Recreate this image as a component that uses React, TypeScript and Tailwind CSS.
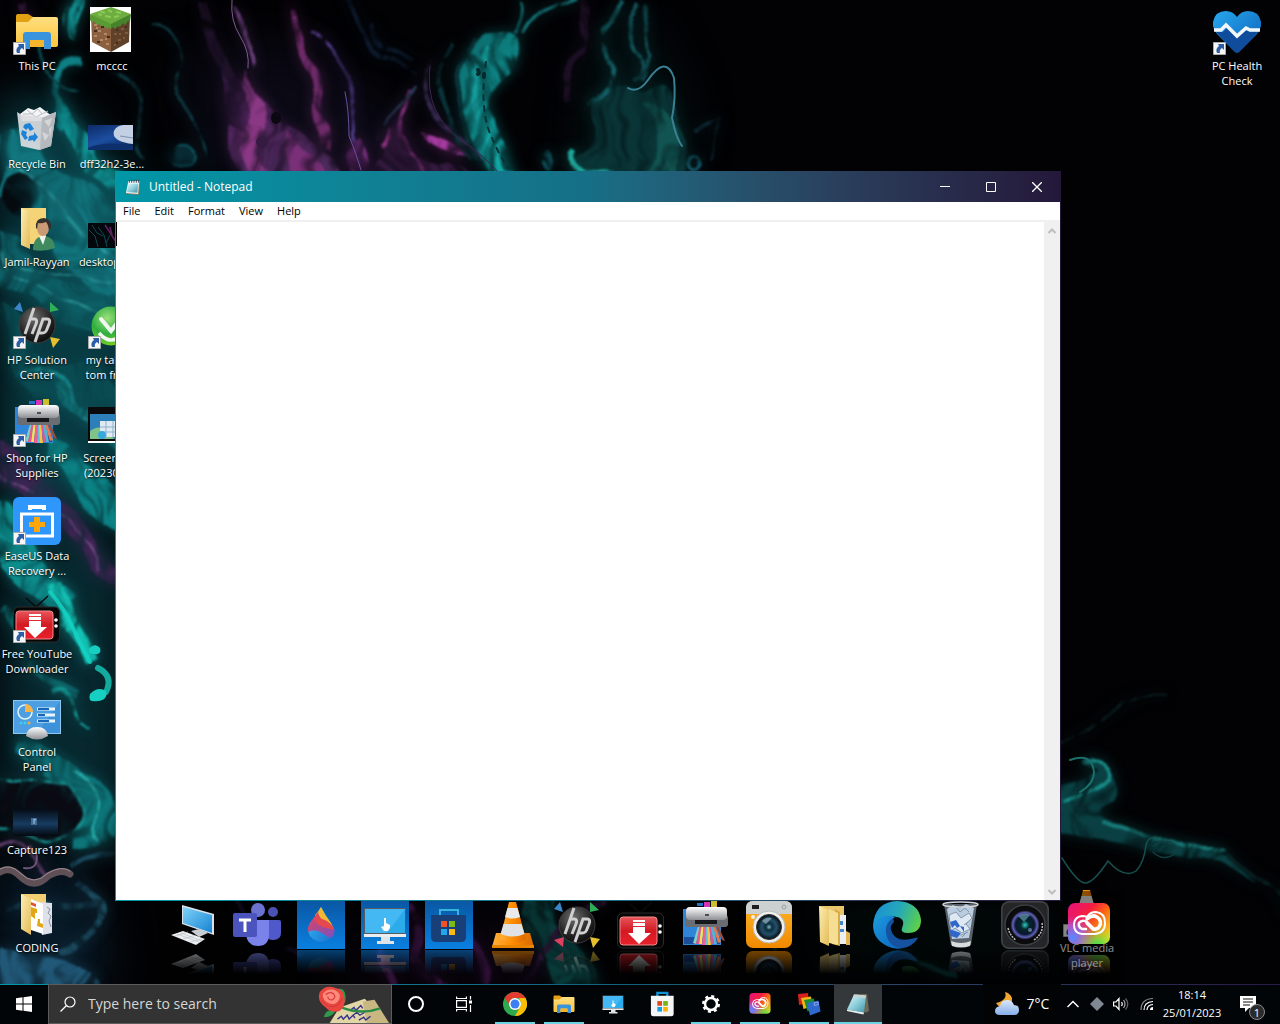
import type { ReactNode } from "react";
import { clsx } from "clsx";

/* ---------------------------------------------------------------- shared */

// Gradients are declared once and used by every icon on the page.
function SharedDefs() {
  return (
    <svg aria-hidden className="absolute size-0">
      <defs>
        <linearGradient id="folder" x1="0" y1="0" x2="0" y2="1">
          <stop offset="0" stopColor="#ffdf81" />
          <stop offset="1" stopColor="#fcc43a" />
        </linearGradient>
        <linearGradient id="folderPale" x1="0" y1="0" x2="1" y2="1">
          <stop offset="0" stopColor="#fdeeb0" />
          <stop offset="1" stopColor="#e3bb58" />
        </linearGradient>
        <linearGradient id="screen" x1="0" y1="0" x2="1" y2="1">
          <stop offset="0" stopColor="#7fd3f7" />
          <stop offset="1" stopColor="#1583d4" />
        </linearGradient>
        <linearGradient id="silver" x1="0" y1="0" x2="0" y2="1">
          <stop offset="0" stopColor="#ffffff" />
          <stop offset="1" stopColor="#8d9095" />
        </linearGradient>
        <linearGradient id="tile" x1="0" y1="0" x2="0" y2="1">
          <stop offset="0" stopColor="#0a57a4" />
          <stop offset="1" stopColor="#0a80e0" />
        </linearGradient>
        <radialGradient id="hpBall" cx="0.4" cy="0.3" r="0.8">
          <stop offset="0" stopColor="#6d6d6d" />
          <stop offset="0.6" stopColor="#242424" />
          <stop offset="1" stopColor="#050505" />
        </radialGradient>
        <linearGradient id="redTv" x1="0" y1="0" x2="0" y2="1">
          <stop offset="0" stopColor="#e8555b" />
          <stop offset="0.5" stopColor="#d31922" />
          <stop offset="1" stopColor="#e9222c" />
        </linearGradient>
        <linearGradient id="cone" x1="0" y1="0" x2="1" y2="0">
          <stop offset="0" stopColor="#ffb13d" />
          <stop offset="0.5" stopColor="#ff8a00" />
          <stop offset="1" stopColor="#d86a00" />
        </linearGradient>
        <linearGradient id="heart" x1="0" y1="0" x2="1" y2="1">
          <stop offset="0" stopColor="#27a8ee" />
          <stop offset="1" stopColor="#0b5fb8" />
        </linearGradient>
        <linearGradient id="ccBase" x1="0" y1="0" x2="1" y2="0.8">
          <stop offset="0" stopColor="#e5117e" />
          <stop offset="0.4" stopColor="#f5203f" />
          <stop offset="0.65" stopColor="#fb6a12" />
          <stop offset="1" stopColor="#f0d81e" />
        </linearGradient>
        <radialGradient id="ccBlue" cx="0.1" cy="0.85" r="0.6">
          <stop offset="0" stopColor="#4f8dff" />
          <stop offset="0.5" stopColor="#a45fe6" stopOpacity="0.8" />
          <stop offset="1" stopColor="#e5117e" stopOpacity="0" />
        </radialGradient>
        <radialGradient id="ccGreen" cx="0.7" cy="1.05" r="0.5">
          <stop offset="0" stopColor="#2fe05a" />
          <stop offset="1" stopColor="#9be33a" stopOpacity="0" />
        </radialGradient>
        <linearGradient id="edgeTop" x1="0" y1="0.3" x2="1" y2="0.6">
          <stop offset="0" stopColor="#1b8fd4" />
          <stop offset="0.5" stopColor="#25a9b8" />
          <stop offset="1" stopColor="#5dd04a" />
        </linearGradient>
        <linearGradient id="edgeBody" x1="0" y1="0" x2="1" y2="1">
          <stop offset="0" stopColor="#1d9ade" />
          <stop offset="1" stopColor="#0c63bd" />
        </linearGradient>
        <linearGradient id="dropCyan" x1="0" y1="0" x2="1" y2="1">
          <stop offset="0" stopColor="#35c0f2" />
          <stop offset="1" stopColor="#1a6fd0" />
        </linearGradient>
        <linearGradient id="dropPink" x1="0" y1="0" x2="1" y2="1">
          <stop offset="0" stopColor="#e2435f" />
          <stop offset="1" stopColor="#7c4fc0" />
        </linearGradient>
        <radialGradient id="lens" cx="0.5" cy="0.5" r="0.5">
          <stop offset="0" stopColor="#7fb8c8" />
          <stop offset="0.25" stopColor="#0b2c3b" />
          <stop offset="0.6" stopColor="#24506a" />
          <stop offset="1" stopColor="#050a10" />
        </radialGradient>
        <radialGradient id="lensViolet" cx="0.5" cy="0.5" r="0.5">
          <stop offset="0" stopColor="#2ad0c8" />
          <stop offset="0.3" stopColor="#05262b" />
          <stop offset="0.65" stopColor="#0a1730" />
          <stop offset="0.85" stopColor="#5f62b8" />
          <stop offset="1" stopColor="#10101a" />
        </radialGradient>
        <linearGradient id="amber" x1="0" y1="0" x2="0" y2="1">
          <stop offset="0" stopColor="#ffb52b" />
          <stop offset="1" stopColor="#f08a00" />
        </linearGradient>
        <radialGradient id="tomGreen" cx="0.4" cy="0.3" r="0.8">
          <stop offset="0" stopColor="#9be07b" />
          <stop offset="0.5" stopColor="#2fae3f" />
          <stop offset="1" stopColor="#8ad61c" />
        </radialGradient>
        <linearGradient id="glassNote" x1="0" y1="0" x2="1" y2="1">
          <stop offset="0" stopColor="#e3f6fa" />
          <stop offset="0.5" stopColor="#8fd0dc" />
          <stop offset="1" stopColor="#3b93a6" />
        </linearGradient>
        <linearGradient id="cloud" x1="0" y1="0" x2="0" y2="1">
          <stop offset="0" stopColor="#dbe8fb" />
          <stop offset="1" stopColor="#86aee8" />
        </linearGradient>
        <linearGradient id="navyPhoto" x1="0" y1="0" x2="0.6" y2="1">
          <stop offset="0" stopColor="#0d2a66" />
          <stop offset="0.6" stopColor="#1c4fa0" />
          <stop offset="1" stopColor="#0c2b63" />
        </linearGradient>
        <linearGradient id="nightPhoto" x1="0" y1="0" x2="0" y2="1">
          <stop offset="0" stopColor="#050b14" />
          <stop offset="0.55" stopColor="#173c61" />
          <stop offset="1" stopColor="#04080f" />
        </linearGradient>
      </defs>
    </svg>
  );
}

function Icon({
  children,
  className = "size-12",
}: {
  children: ReactNode;
  className?: string;
}) {
  return (
    <svg aria-hidden viewBox="0 0 48 48" className={clsx("shrink-0", className)}>
      {children}
    </svg>
  );
}

type IconProps = { className?: string };

/* ----------------------------------------------------------------- icons */

function ExplorerIcon({ className }: IconProps) {
  return (
    <Icon className={className}>
      <path d="M3 9q0-2 2-2h10l5 3v6H3z" fill="#e2a112" />
      <path d="M3 15h12l5-5h23q2 0 2 2v26q0 2-2 2H5q-2 0-2-2z" fill="url(#folder)" />
      <path d="M10 42V28q0-3 3-3h22q3 0 3 3v14h-7v-7q0-2-2-2H19q-2 0-2 2v7z" fill="#3a94dd" />
      <path d="M17 33h14v7H17z" fill="#f3b52c" />
    </Icon>
  );
}

function RecycleIcon({ className }: IconProps) {
  return (
    <Icon className={className}>
      <path d="M7 9l8-6 6 2 6-3 8 6 4 3-6 5H9z" fill="#f4f5f6" />
      <path d="M14 5l5 4 6-5 4 5 6-3M10 9l9 0 4 3 6-3" fill="none" stroke="#b7bbc0" />
      <path d="M4 7l5 3 20 2 14-5-5 34-12 4L8 41z" fill="#d9dcdf" fillOpacity="0.93" />
      <path d="M29 13l14-6-5 34-11 4z" fill="#b5b9be" />
      <path d="M31 16l8-3-3 9zM29 27l7 3-4 6zM36 24l3-3-2 12z" fill="#d3d6d9" />
      <g fill="#1c84d8">
        <path d="M12 19l5-1 4 6-4 2-2-3-2 2-3-3z" />
        <path d="M9 25l5 2-1 3 2 3-3 2-4-6z" />
        <path d="M16 31l5-1 0-3 4 5-4 5-1-2-5 1z" />
      </g>
    </Icon>
  );
}

function GlassBinIcon({ className }: IconProps) {
  return (
    <Icon className={className}>
      <path d="M7 3l33 0-6 41q-10 4-20 0z" fill="#6f7883" fillOpacity="0.8" />
      <path d="M10 8l6-4 7 3 6-4 8 4-5 30-17 1z" fill="#b9cce0" />
      <path d="M12 14l7-3 5 6 8-5 3 5-6 6 4 5-8 4-7-5-4 3zM14 32l10 2 7-3" fill="#dde8f3" stroke="#8497ae" />
      <path d="M19 6l4 5 5-4 4 4M27 24l5-4M25 36l5-5" fill="none" stroke="#8195ad" />
      <path d="M13 21l6-2 4 6-3 2-2-3-3 3zM12 28l6 2 6 2-4 5-6-2zM23 25l4 1 0 5z" fill="#2f66c9" />
      <path d="M14 40q10 4 20 0l-1 5q-9 3-18 0z" fill="#d8dadd" />
      <ellipse cx="23.500" cy="3.500" rx="17.500" ry="2.500" fill="none" stroke="#d2d6da" strokeWidth="1.500" />
    </Icon>
  );
}

function UserFolderIcon() {
  return (
    <Icon>
      <path d="M8 5h25v36H14z" fill="#f5d477" />
      <path d="M8 5l9 4v37l-9-4z" fill="url(#folderPale)" />
      <path d="M20 47q0-13 10-14 11 0 12 12-10 4-22 2z" fill="#3f8a5f" />
      <path d="M26 33l4 9 3-9z" fill="#eef3f0" />
      <ellipse cx="30" cy="25" rx="6" ry="8" fill="#c99a75" />
      <path d="M23 25q-1-10 8-10 8 1 7 10l-2 2q-1-6-3-8-5 2-8 1l-1 6z" fill="#33302e" />
    </Icon>
  );
}

function HpIcon({ className, pink = false }: IconProps & { pink?: boolean }) {
  return (
    <Icon className={className}>
      <path d="M7 1l3 10-9-3z" fill="#3a86c8" />
      <path d="M37 1l9 8-9 2z" fill="#2fae57" />
      <path d="M37 36l10 2-7 9z" fill="#e6bf2d" />
      {pink && <path d="M11 36l-1 10-9-7z" fill="#e0405f" />}
      <circle cx="24" cy="24" r="18" fill="url(#hpBall)" stroke="#3d3d3d" />
      <g fill="none" stroke="#cfcfcf" strokeWidth="3">
        <path d="M21 7l-9 26M17 18h4q4 0 2 5l-4 10" />
        <path d="M22 41l8-23h4q4 0 2 5l-2 5q-1 4-5 4h-3" />
      </g>
    </Icon>
  );
}

function PrinterIcon({ className }: IconProps) {
  return (
    <Icon className={className}>
      <path d="M2 8h38v36H2z" fill="#2f86d8" />
      <path d="M3 36h36v7H3z" fill="#1b4e9b" />
      <path d="M16 2h6v3h-6z" fill="#2472c8" />
      <path d="M23 1h6v5h-6z" fill="#d632b4" />
      <path d="M30 0h6v6h-6z" fill="#cdbf2b" />
      <path d="M18 22l-6 20 3 1 5-20z" fill="#7ad3c8" />
      <path d="M19 22l-4 21h3l3-21z" fill="#e8588c" />
      <path d="M21 22l-3 21h3l2-21z" fill="#f0e25a" />
      <path d="M23 22l-2 22h3l1-22z" fill="#ee5f9a" />
      <path d="M25 22l-1 22h3V22z" fill="#5ec2dd" />
      <path d="M26 22l1 22h3l-2-22z" fill="#f4c64a" />
      <path d="M28 22l2 21h3l-3-21z" fill="#d8579c" />
      <path d="M29 22l4 21h3l-4-21z" fill="#4fb5d6" />
      <path d="M31 22l6 20 3-1-7-19z" fill="#e8794c" />
      <path d="M33 22l8 17 3 1-8-18z" fill="#9a4b3a" />
      <rect x="4" y="14" width="43" height="12" rx="3" fill="#6a6d72" />
      <path d="M14 19h22v4H14z" fill="#15171a" />
      <rect x="5" y="6" width="41" height="13" rx="4" fill="url(#silver)" />
      <path d="M24 13h4v2h-4z" fill="#4b4f55" />
    </Icon>
  );
}

function EaseUsIcon() {
  return (
    <Icon>
      <rect width="48" height="48" rx="6" fill="#2f96fb" />
      <path d="M17 13V10h14v3" fill="none" stroke="#fff" strokeWidth="4" />
      <rect x="8.500" y="17" width="31" height="22" fill="none" stroke="#fff" strokeWidth="3" />
      <path d="M21 20h6v5h5v5h-5v5h-6v-5h-5v-5h5z" fill="#ffa60d" />
    </Icon>
  );
}

function DownloaderIcon({ className }: IconProps) {
  return (
    <Icon className={className}>
      <path d="M13 3l10 9L35 1" fill="none" stroke="#0b0b0b" strokeWidth="1.500" />
      <rect x="0.500" y="12" width="46" height="35" rx="5" fill="#060606" stroke="#2a2a2a" />
      <rect x="3" y="16" width="37" height="28" rx="3" fill="url(#redTv)" stroke="#f08a8d" />
      <path d="M16 19h12v2H16zM16 22h12v3H16zM16 26h12v6h6L22 43 11 32h5z" fill="#fff" />
      <circle cx="43" cy="25" r="1.800" fill="#fff" />
      <circle cx="43" cy="31" r="1.800" fill="#fff" />
    </Icon>
  );
}

function ControlPanelIcon() {
  return (
    <Icon>
      <rect x="0.500" y="7.500" width="47" height="33" fill="#3d92da" stroke="#8cc9f2" />
      <path d="M1 8h46L24 40H1z" fill="#58a9e6" fillOpacity="0.6" />
      <circle cx="12" cy="19" r="7" fill="none" stroke="#e4f3fd" strokeWidth="1.500" />
      <path d="M12 11a8 8 0 018 8h-8z" fill="#f7b44b" />
      <path d="M24 16h18M24 22h18M24 28h18" stroke="#e9f5fd" strokeWidth="3" />
      <path d="M25 16h11M25 22h7M25 28h11" stroke="#1766b8" strokeWidth="2" />
      <circle cx="8" cy="30" r="1.500" fill="#39d0f0" />
      <circle cx="12" cy="30" r="1.500" fill="#39d0f0" />
      <circle cx="16" cy="30" r="1.500" fill="#f7a93a" />
      <path d="M13 43q1-9 11-9 10 0 11 9-11 7-22 0z" fill="url(#silver)" />
    </Icon>
  );
}

function CaptureIcon() {
  return (
    <Icon>
      <path d="M0 18h45v27H0z" fill="url(#nightPhoto)" />
      <path d="M18 27h6v7h-6z" fill="#3f6a92" />
      <path d="M21 33v-5l2 1" fill="none" stroke="#a9c8e6" />
    </Icon>
  );
}

function CodingIcon() {
  return (
    <Icon>
      <path d="M8 5h25v36H14z" fill="#f1cf72" />
      <path d="M25 13l14 1v30l-10 2z" fill="#dfe1ea" />
      <path d="M18 10l12 5v30l-12-4z" fill="#fff" />
      <path d="M18 13l5 2v3l-5-2z" fill="#e0533a" />
      <path d="M18 18l6 2v4l-2 0v6l-4-3zM25 30h2v4l3 1v4l-6-2z" fill="#e2a716" />
      <path d="M34 18l3 2-2 4 3 3-2 5 2 6" fill="none" stroke="#8a93a8" />
      <path d="M8 5l10 5v36L8 40z" fill="url(#folderPale)" />
    </Icon>
  );
}

function GrassBlockIcon() {
  return (
    <Icon>
      <path d="M2 0h41v45H2z" fill="#fff" />
      <path d="M3 8l20 9v28L4 35z" fill="#8a6040" />
      <path d="M42 8l-19 9v28l18-10z" fill="#5f4029" />
      <path d="M23 0l20 7-20 12L2 7z" fill="#6dac3f" />
      <path d="M2 7l21 10v5l-2-2-2 2-3-3-2 1-3-3-2 1-3-4-2 2-2-3z" fill="#5a9a35" />
      <path d="M43 7L23 17v5l2-2 2 2 3-3 2 1 3-4 2 2 3-4 2 1z" fill="#47832a" />
      <path d="M12 4l5 2M20 3l4 2M28 5l5 1M17 9l6 1M26 10l5-1M10 7l4 1" stroke="#8cc957" strokeWidth="2" />
      <path d="M6 18h3M10 24h3M16 27h3M6 29h3M12 33h3M18 37h3M8 21h2M17 32h2" stroke="#b58a63" strokeWidth="2" />
      <path d="M26 27h3M33 22h3M30 33h3M37 26h3M35 31h2M26 38h2M31 27h2" stroke="#7f5a3b" strokeWidth="2" />
      <path d="M6 24h3M13 20h3M19 30h3M9 35h3M28 23h2M37 20h2M28 36h2" stroke="#442d1c" strokeWidth="2" />
    </Icon>
  );
}

function BluePhotoIcon() {
  return (
    <Icon>
      <path d="M0 20h45v25H0z" fill="url(#navyPhoto)" />
      <path d="M45 20v19q-9-1-15-4-6-4-4-9 2-5 9-6z" fill="#c3cfe2" />
      <path d="M32 31l13 2" stroke="#8291ad" />
      <path d="M0 43q18-8 45-2v4H0z" fill="#0d2f6c" />
    </Icon>
  );
}

function DesktopPhotoIcon() {
  return (
    <Icon>
      <path d="M0 20h45v25H0z" fill="#04070c" />
      <path d="M1 27l6 6 3 11M4 22l5 8 6 3M10 24l6 8 3 12M22 32l-4 8" fill="none" stroke="#0e4a50" />
      <path d="M17 22l6 9 5 8M22 24l2 8" fill="none" stroke="#5f2460" strokeWidth="1.500" />
    </Icon>
  );
}

function TomIcon() {
  return (
    <Icon>
      <circle cx="23" cy="25" r="19.500" fill="url(#tomGreen)" />
      <path d="M13 18l10 12 10-13" fill="none" stroke="#f3f7f2" strokeWidth="4" strokeLinecap="round" />
      <path d="M11 32q12 14 24 0" fill="none" stroke="#f3f7f2" strokeWidth="3.500" />
    </Icon>
  );
}

function ScreenshotIcon() {
  return (
    <Icon>
      <path d="M0 8h45v36H0z" fill="#0a0a0c" />
      <path d="M2 15h43v25H2z" fill="#2c7fb8" />
      <path d="M2 32q8-6 14-2t10 10H2z" fill="#7fc486" />
      <path d="M12 22h26v16H12z" fill="#dfeaf2" />
      <path d="M12 28h26M12 33h26M18 22v16M25 22v16" stroke="#8fb3cd" />
      <circle cx="14" cy="36" r="4" fill="#35a9dc" />
      <path d="M0 42h45v2H0z" fill="#fff" />
    </Icon>
  );
}

function HealthIcon() {
  return (
    <Icon>
      <path d="M22 45L4 27Q-1 21 0 15 2 4 13 4q7 0 11 6 4-6 11-6 11 0 13 11 1 6-4 12L26 45q-2 1-4 0z" fill="url(#heart)" />
      <path d="M3 25h7l4-4 10 10 10-8 3 2h8L26 45q-2 1-4 0z" fill="#0f4c9c" />
      <path d="M1 23h7l5-5 11 11 9-8 4 2h10" fill="none" stroke="#f4f7fa" strokeWidth="3.500" />
    </Icon>
  );
}

function VlcIcon({ className }: IconProps) {
  return (
    <Icon className={className}>
      <path d="M7 32h34l4 14H3z" fill="url(#cone)" />
      <path d="M20 1h7l10 37q-13 7-26 0z" fill="url(#cone)" />
      <path d="M18.500 7h10l2.500 9q-8 3-15 0z" fill="#e9eaec" />
      <path d="M14.500 23h18l3 10q-12 5-24 0z" fill="#dfe1e4" />
      <path d="M3 44h42v3H3z" fill="#e68300" />
    </Icon>
  );
}

function ComputerIcon() {
  return (
    <Icon>
      <path d="M13 4l32 9v21L13 23z" fill="#d9e2ea" />
      <path d="M14 6l29 8v18L14 22z" fill="url(#screen)" />
      <path d="M22 30l8-2 9 4-9 4z" fill="#c9ced3" />
      <path d="M2 34l12-4 22 8-9 6z" fill="#eceff2" />
      <path d="M8 33l22 8M12 32l21 8M6 35l13-4M14 38l13-4M21 41l12-3" stroke="#b4bac0" strokeWidth="0.600" />
    </Icon>
  );
}

function TeamsIcon() {
  return (
    <Icon>
      <circle cx="25" cy="9" r="7" fill="#6b72d0" />
      <circle cx="40" cy="11" r="5" fill="#4a51b0" />
      <path d="M32 19h14q2 0 2 2v11q0 7-8 7-5 0-8-4z" fill="#5059c9" />
      <path d="M13 19h23v14q0 12-11 12T13 33z" fill="#7b83eb" />
      <rect y="12" width="24" height="24" rx="2" fill="#4b53bc" />
      <path d="M6 19h12M12 19v12" stroke="#fff" strokeWidth="3" />
    </Icon>
  );
}

function PaintDropIcon() {
  return (
    <Icon>
      <path d="M0 0h48v48H0z" fill="url(#tile)" />
      <path d="M24 6q4 8 10 16 6 11-1 16-9 6-17 0-8-6-3-16 7-8 11-16z" fill="url(#dropCyan)" />
      <path d="M24 6q4 8 10 16l3 6q-8-4-14-8l-5-6q4-4 6-8z" fill="#f3b832" />
      <path d="M21 11l-8 11q-3 5-2 9 6-4 14 1 5 4 9 5 5-5 3-10-4-5-10-7-5-3-6-9z" fill="url(#dropPink)" />
      <path d="M17 17q1 6 9 9l11 3q-2-8-12-11-5-2-4-7z" fill="#e5484e" />
    </Icon>
  );
}

function TouchMonitor({ className, tile = false }: IconProps & { tile?: boolean }) {
  return (
    <Icon className={className}>
      {tile && <path d="M0 0h48v48H0z" fill="url(#tile)" />}
      <path d="M3 7h42v27H3z" fill="#555b61" />
      <path d="M4 8h40v24H4z" fill="#2cabeb" />
      <path d="M4 8h40L26 32H4z" fill="#43b8f2" />
      <path d="M3 33h42v3H3z" fill="#e9edf0" />
      <path d="M20 36h9v4h4v3H16v-3h4z" fill="#dfe4e8" />
      <path d="M23 17h2v5l4 2v3l-2 3h-4l-3-4 3-1z" fill="#fff" />
    </Icon>
  );
}

function StoreTileIcon() {
  return (
    <Icon>
      <path d="M0 0h48v48H0z" fill="url(#tile)" />
      <path d="M15 14V9h18v5" fill="none" stroke="#35b5dc" strokeWidth="2" />
      <path d="M6 14h35v22q0 5-5 5H11q-5 0-5-5z" fill="#183f78" />
      <path d="M16 20h6v6h-6z" fill="#f0512a" />
      <path d="M24 20h6v6h-6z" fill="#7cba18" />
      <path d="M16 28h6v6h-6z" fill="#1fa8ee" />
      <path d="M24 28h6v6h-6z" fill="#fbb917" />
    </Icon>
  );
}

function StoreIcon() {
  return (
    <Icon className="size-7">
      <path d="M16 12V5h17v7" fill="none" stroke="#1291d6" strokeWidth="4" />
      <path d="M5 10h39v31q0 4-4 4H9q-4 0-4-4z" fill="#f4f5f6" />
      <path d="M16 19h8v8h-8z" fill="#e5461c" />
      <path d="M26 19h8v8h-8z" fill="#76b40e" />
      <path d="M16 29h8v8h-8z" fill="#12a0e8" />
      <path d="M26 29h8v8h-8z" fill="#fbb20f" />
    </Icon>
  );
}

function RetroCameraIcon() {
  return (
    <Icon>
      <rect x="1" y="0" width="46" height="47" rx="7" fill="url(#amber)" />
      <path d="M1 13V7q0-7 7-7h32q7 0 7 7v6z" fill="#cdd0d1" />
      <path d="M7 4h7v4H7z" fill="#1d1d1d" />
      <circle cx="39" cy="6" r="2" fill="none" stroke="#9da1a3" />
      <circle cx="8" cy="16" r="2" fill="#f4efe6" />
      <circle cx="24" cy="26" r="16" fill="#eef0f0" stroke="#b7babb" />
      <circle cx="24" cy="26" r="12.500" fill="url(#lens)" stroke="#333" />
      <path d="M17 20q4-5 10-3l-6 6z" fill="#a8c5cf" fillOpacity="0.6" />
    </Icon>
  );
}

function FolderStackIcon() {
  return (
    <Icon>
      <path d="M10 5h25v34H16z" fill="#e9c56c" />
      <path d="M30 14h7v29h-7z" fill="#edf0f3" />
      <path d="M31 20h3v4h-3zM31 28h4v3h-4z" fill="#3f86cf" />
      <path d="M26 8l5 3v34l-8-2z" fill="#d9ab45" />
      <path d="M10 5l10 4v36l-9-4z" fill="url(#folderPale)" />
      <path d="M20 8l9 4v32l-9-2z" fill="#f6dd94" />
      <path d="M37 30l4 2v12h-4z" fill="#e2b552" />
    </Icon>
  );
}

function EdgeIcon() {
  return (
    <Icon>
      <path d="M0 24Q2 1 24 0q22 1 24 19 0 13-13 13-8 0-6-5 4-9-5-11Q10 13 0 24z" fill="url(#edgeTop)" />
      <path d="M0 24Q8 11 22 16q-8 6-8 14 1 14 16 17-8 2-16-2Q0 38 0 24z" fill="url(#edgeBody)" />
      <path d="M20 17q-8 5-7 14 2 16 17 16 9-1 15-10-1-1-3 0-20 6-24-8-1-5 3-8z" fill="#1553a0" />
    </Icon>
  );
}

function LensAppIcon() {
  return (
    <Icon>
      <rect width="48" height="48" rx="8" fill="#3a3b3d" />
      <rect x="1" y="1" width="46" height="46" rx="7" fill="#242527" stroke="#47494c" />
      <circle cx="24" cy="24" r="20" fill="#0b0b0d" stroke="#3b3d40" strokeWidth="1.500" />
      <path d="M7 27q2 8 8 12M41 22q2 10-8 17" fill="none" stroke="#b9bbbd" strokeWidth="1.500" strokeDasharray="2 1" />
      <circle cx="24" cy="24" r="14.500" fill="url(#lensViolet)" />
      <path d="M17 15q6-4 12-1l-6 7z" fill="#7fc9d6" fillOpacity="0.5" />
      <circle cx="29" cy="29" r="2" fill="#b7c6ff" fillOpacity="0.5" />
    </Icon>
  );
}

function CreativeCloudIcon({ className }: IconProps) {
  return (
    <Icon className={className}>
      <rect x="3" y="2" width="42" height="41" rx="7" fill="url(#ccBase)" />
      <rect x="3" y="2" width="42" height="41" rx="7" fill="url(#ccBlue)" />
      <rect x="3" y="2" width="42" height="41" rx="7" fill="url(#ccGreen)" />
      <g fill="none" stroke="#fff" strokeLinecap="round">
        <path d="M30 33H17q-8-1-8-9t8-9q3 0 5 1 3-5 9-5 9 1 9 11t-10 11z" strokeWidth="2" />
        <path d="M29 28l-7-7q-5-3-8 1-1 4 3 6h4" strokeWidth="2.500" />
        <path d="M22 18q5-5 10-2 6 4 2 10-2 3-6 2l-6-6" strokeWidth="3.500" />
      </g>
    </Icon>
  );
}

function ChromeIcon() {
  return (
    <Icon className="size-6">
      <circle cx="24" cy="24" r="24" fill="#2da94f" />
      <path d="M24 0q14 0 21 12H24q-10 0-12 12L3 12Q11 0 24 0z" fill="#e33b2e" />
      <path d="M45 12q7 14-1 25-7 11-20 11l10-18q4-8-2-18z" fill="#fdbd00" />
      <circle cx="24" cy="24" r="12" fill="#fff" />
      <circle cx="24" cy="24" r="9" fill="#3d7ff0" />
    </Icon>
  );
}

function GearIcon() {
  return (
    <Icon className="size-6">
      <circle cx="24" cy="24" r="12" fill="none" stroke="#fff" strokeWidth="5" />
      <circle cx="24" cy="24" r="15.500" fill="none" stroke="#fff" strokeWidth="5" strokeDasharray="6 6.170" />
    </Icon>
  );
}

function CardsIcon() {
  return (
    <Icon className="size-6">
      <path d="M2 4l20-2 2 20-20 4z" fill="#d8201d" />
      <path d="M8 12l20-3 3 20-18 5z" fill="#f2b713" />
      <path d="M14 16l20-3 3 20-16 6z" fill="#1a8c36" />
      <path d="M20 22l23-5 4 22-21 8z" fill="#2f68cf" />
      <path d="M34 22l8-2 1 5-8 2z" fill="none" stroke="#d6e3fb" />
    </Icon>
  );
}

function NotebookIcon() {
  return (
    <Icon className="size-6">
      <path d="M18 4h24l4 34-8 4z" fill="#6f6a55" />
      <path d="M16 5l24 2-4 34-34-6z" fill="url(#glassNote)" />
      <path d="M16 5l24 2-1 5-25-2z" fill="#c7d3d6" />
      <path d="M2 35l34 6-1 4-33-7z" fill="#e9f3f5" />
    </Icon>
  );
}

function NotepadSmallIcon() {
  return (
    <Icon className="size-4">
      <path d="M12 6h33l-3 40-6 1-33-3z" fill="#9a7c58" />
      <path d="M10 6h33l-4 39-36-3z" fill="#e8f4f7" />
      <path d="M11 14h29l-3 27-31-2z" fill="url(#glassNote)" />
      <path d="M13 2v9M20 2v9M27 2v9M34 2v9M41 2v9" stroke="#3a4a50" strokeWidth="3" />
    </Icon>
  );
}

function RoseDoodle() {
  return (
    <svg aria-hidden viewBox="0 0 74 38" className="h-[37px] w-[74px] shrink-0">
      <path d="M12 38l10-16 26-9 24 25z" fill="#e3d6a6" />
      <path d="M46 16l12-2 15 24H50z" fill="#c9b782" />
      <path d="M20 34l4-3 2 3 4-4 2 4 4-4 2 3M33 25l4-3 2 3 5-5 2 3M42 35l5-3 2 3 5-4M36 30l4-3 3 3 5-3" fill="none" stroke="#35308c" strokeWidth="1.400" />
      <path d="M24 22q20 8 40 1" fill="none" stroke="#2d8a45" strokeWidth="2.500" />
      <path d="M20 3q10-2 8 14-6 1-8-6zM6 32q2-9 12-7-2 7-12 7z" fill="#2f9a4d" />
      <path d="M2 6Q8-2 18 2q8 1 9 9 2 10-5 15-9 2-14-4Q-2 15 2 6z" fill="#e8463f" />
      <path d="M5 8q5-6 12-4 7 3 5 9-3 7-10 5-8-3-7-10z" fill="#ff8a7c" />
      <path d="M8 9q4-4 8-1 3 4-1 6-4 1-5-3M4 14q3 8 13 7 6-2 8-9" fill="none" stroke="#d83a3c" strokeWidth="1.200" />
    </svg>
  );
}

/* ------------------------------------------------------------- wallpaper */

function Wallpaper() {
  return (
    <svg
      aria-hidden
      viewBox="0 0 1280 1024"
      preserveAspectRatio="xMidYMid slice"
      className="absolute inset-0 -z-10 size-full bg-[#020204]"
    >
      <defs>
        {/* bends the shapes, then breaks their paint up into streaks over a glow */}
        <filter
          id="fluid"
          filterUnits="userSpaceOnUse"
          x="-40"
          y="-40"
          width="1360"
          height="1104"
          colorInterpolationFilters="sRGB"
        >
          <feTurbulence type="fractalNoise" baseFrequency="0.016" numOctaves="2" seed="8" result="bend" />
          <feDisplacementMap in="SourceGraphic" in2="bend" scale="26" xChannelSelector="R" yChannelSelector="G" result="bent" />
          <feTurbulence type="fractalNoise" baseFrequency="0.070 0.022" numOctaves="5" seed="21" result="noise" />
          <feDisplacementMap in="noise" in2="bend" scale="120" xChannelSelector="G" yChannelSelector="R" result="swirl" />
          <feColorMatrix in="swirl" type="matrix" values="0 0 0 0 0  0 0 0 0 0  0 0 0 0 0  3.400 0 0 0 -1.050" result="streak" />
          <feComposite in="bent" in2="streak" operator="in" result="streaked" />
          <feGaussianBlur in="streaked" stdDeviation="0.800" result="paint" />
          <feGaussianBlur in="bent" stdDeviation="7" result="wide" />
          <feColorMatrix in="wide" type="matrix" values="1 0 0 0 0  0 1 0 0 0  0 0 1 0 0  0 0 0 0.500 0" result="glow" />
          <feMerge>
            <feMergeNode in="glow" />
            <feMergeNode in="paint" />
          </feMerge>
        </filter>
        <filter id="soft" x="-50%" y="-50%" width="200%" height="200%" colorInterpolationFilters="sRGB">
          <feGaussianBlur stdDeviation="22" />
        </filter>
        <linearGradient id="violetFlow" x1="0" y1="0" x2="0.300" y2="1">
          <stop offset="0" stopColor="#2a1538" />
          <stop offset="0.500" stopColor="#52265e" />
          <stop offset="1" stopColor="#4c2a5c" />
        </linearGradient>
        <linearGradient id="tealFlow" x1="0" y1="0" x2="0.400" y2="1">
          <stop offset="0" stopColor="#0d6a6c" />
          <stop offset="1" stopColor="#0fa09f" />
        </linearGradient>
      </defs>

      <g filter="url(#soft)">
        <path d="M0 100l60 0 80 90v260L0 600z" fill="#083a42" />
        <path d="M0 480l130 60v280l-60 30L0 800z" fill="#07282f" />
        <path d="M180 60l110-20 90 60 100 80H210z" fill="#0a0914" />
        <path d="M590 50l60-20 40 90-20 60H580z" fill="#031012" />
        <path d="M0 860l90 10 20 114H0z" fill="#081a28" />
        <path d="M360 930l140-20 110 74H340z" fill="#100818" />
        <path d="M820 900h240v60H820z" fill="#03100f" />
      </g>

      <g filter="url(#fluid)">
        {/* left edge, top to bottom */}
        <path d="M24 0q10 24 32 40" fill="none" stroke="#3b1c45" strokeWidth="8" />
        <path d="M82 0q4 22-4 44l-8-4q-2-20-2-40z" fill="#11898a" />
        <path d="M84 56q-20 0-24 14t-4 26q8 18 2 34" fill="none" stroke="#0f7f84" strokeWidth="6" />
        <path d="M52 24q-16 22-8 46 12 18 34 18" fill="none" stroke="#0a484d" strokeWidth="3" />
        <path d="M60 96l24 34 20 40 20 14v16l-34-22-18-34-18-30z" fill="#0f8f91" />
        <path d="M0 134q30-14 44 20 20 20 40 30 24 14 42 30v90q-40-10-66-40Q30 190 0 196z" fill="#12777f" />
        <path d="M0 168q40 0 62 46 24 40 64 52" fill="none" stroke="#2fa3a8" strokeWidth="3" />
        <path d="M4 180q22-14 34 6 2 26-20 30-18-10-14-36z" fill="#050a0f" />
        <path d="M0 232q30 14 46 44 30 20 80 14v30q-50 14-76 0Q20 290 0 286z" fill="#0d5f66" />
        <path d="M12 262q40 26 110 16M0 250q24 40 60 50t60 4" fill="none" stroke="#2b9498" strokeWidth="2" />
        <path d="M0 300q30 20 30 50 26 20 60 10l34 40v40q-46-40-80-44Q10 380 0 350z" fill="#0a4b52" />
        <path d="M20 376q40-16 56 20 20 40 50 56" fill="none" stroke="#16898c" strokeWidth="4" />
        <path d="M60 380q10 24 34 36 20 14 30 34" fill="none" stroke="#0f6d72" strokeWidth="8" />
        <path d="M52 436q20 18 34 32l38 30v36q-28-10-42-32-14-26-40-40z" fill="#0c8285" />
        <path d="M0 440q20 8 30 34 14 18 46 34 16 20 22 46l26 20v14q-30-10-42-38-10-28-38-36Q14 500 0 474z" fill="#3d2452" />
        <path d="M0 470q30 40 70 44 20 26 30 56" fill="none" stroke="#7b5290" strokeWidth="2" />
        <path d="M0 500q30 20 40 50 10 30 34 50l-20 14Q20 590 0 570z" fill="#0d8c8c" />
        <path d="M48 586l14 0q4 24 16 36 14 20 22 40l-12 2q-10-22-26-38z" fill="#12c2b4" />
        <path d="M0 610q26 30 30 60 20 16 50 20" fill="none" stroke="#0c6468" strokeWidth="7" />
        <path d="M52 690q16-6 26 10 2 20 14 30" fill="none" stroke="#149a95" strokeWidth="3" />
        <path d="M20 730q40 24 60 46 34 6 42 50-16 22-46 24-6-24 0-40-34-40-60-58z" fill="#0d7478" />
        <path d="M0 772q40 10 66 12 20 20 6 50Q40 850 0 832" fill="#0a0a12" stroke="#16908f" strokeWidth="3" />
        <path d="M70 774q30 10 24 34-12 20 4 34" fill="none" stroke="#2cb5b0" strokeWidth="2" />
        <path d="M28 850q0 14 14 26M0 850q20-2 30 10" fill="none" stroke="#5a3c68" strokeWidth="4" />
        <path d="M74 870q30-20 50-20M82 888q24 16 14 40-20 20-40 22" fill="none" stroke="#1b4a5e" strokeWidth="6" />
        <path d="M0 948q20 8 40 6 40 6 60 34H0z" fill="#215877" />
        <path d="M0 910q30-10 60 0t40-4" fill="none" stroke="#153a4a" strokeWidth="6" />

        {/* teal curl beside the first icons */}
        <path d="M112 66q22 14 24 50 0 26 10 40M150 24q34 10 30 42-14 20 4 40 20 24 30 64" fill="none" stroke="#0f3c46" strokeWidth="3" />
        <ellipse cx="180" cy="152" rx="14" ry="11" fill="#072a33" stroke="#0f5560" strokeWidth="2" />
        <path d="M88 152q24 20 40 22l-6 10-34-20z" fill="#0e8280" />

        {/* violet flames */}
        <path d="M220 70q20 12 32 16 18 18 24 34 44 22 76 66H244q-8-30-12-60-4-30-12-56z" fill="url(#violetFlow)" />
        <path d="M246 70q4 16 18 32 6 30-4 50 2 16 14 30l-22 6q-8-40-4-70-4-30-2-48z" fill="#8a3884" />
        <path d="M286 130q10 20 30 30 10 10 16 26h-40z" fill="#7a3078" />
        <path d="M236 0q0 26 8 40 12 16 10 34" fill="none" stroke="#6b3f7c" strokeWidth="3" />
        <path d="M204 0q6 50 36 90" fill="none" stroke="#1f1229" strokeWidth="10" />
        <path d="M280 0q20 16 26 38l8 36q0 30 10 50l8 32-8-6q-10-20-14-50-6-20-6-44-8-26-24-56z" fill="#6d2a68" />
        <path d="M312 26q24 10 34 60 4 30 4 50 10 20 14 44" fill="none" stroke="#513b86" strokeWidth="4" />
        <path d="M346 160q4-20 14-22 10 16 2 40-8-4-16-18z" fill="#742e7c" />
        <path d="M366 184q-2-20 18-28 16-24 24-50 2 24-4 40 20 20 40 20 30 8 50 30z" fill="#351a40" />
        <path d="M410 94q-4 20-4 44 10 20 14 40" fill="none" stroke="#8a3484" strokeWidth="4" />
        <path d="M418 92q-30 24-38 50" fill="none" stroke="#2c3e5c" strokeWidth="3" />
        <path d="M424 136q20 2 44 24-20 4-44-24z" fill="#a53ba0" />
        <path d="M384 150q10-4 12-20" fill="none" stroke="#a0388f" strokeWidth="4" />
        <path d="M348 0q16 40 34 60l36 20M372 20q-4 30 40 44" fill="none" stroke="#0c1a2b" strokeWidth="4" />
        <path d="M430 60q-10 60 30 80 20 16 40 44" fill="none" stroke="#382a52" strokeWidth="4" />

        {/* bright teal ribbon */}
        <path d="M482 28q20 2 30 12 10 22-2 34-20 14-16 36 8 50 30 76h-24q-30-30-36-74-4-60 18-84z" fill="url(#tealFlow)" />
        <path d="M488 46q-10 30-8 60 6 40 30 74" fill="none" stroke="#18b3b0" strokeWidth="8" strokeOpacity="0.700" />
        <path d="M474 34q-30 60 2 130M450 40q-24 60 20 124" fill="none" stroke="#0a353b" strokeWidth="4" />
        <path d="M518 0q4 20-8 36M572 2q-30 6-54 34" fill="none" stroke="#137276" strokeWidth="4" />
        <path d="M578 0q4 30 4 50-20 20-18 50" fill="none" stroke="#1c0f24" strokeWidth="8" />

        {/* green swirls on the right */}
        <path d="M598 92q20-14 44 2 34-20 36 20 6 50 4 74H580q-14-20 8-34 14-20 10-34-6-14 0-28z" fill="#0a3537" />
        <path d="M640 104q20 20 10 50l-10 32h32l4-60q-16-26-36-22z" fill="#115452" />
        <path d="M622 0q-8 20-20 30 4 24 12 40-2 20-24 32" fill="none" stroke="#136064" strokeWidth="5" />
        <path d="M640 0q-20 34-2 50 6 20-6 30M650 0q-8 24 0 50-8 10-10 30" fill="none" stroke="#12555a" strokeWidth="4" />
        <path d="M578 152q-8 18 10 22 24-8 30 10" fill="none" stroke="#1ea59a" strokeWidth="5" />
        <path d="M692 130q20-6 28-10-4 20-14 40" fill="none" stroke="#0d2a33" strokeWidth="3" />
        <ellipse cx="552" cy="162" rx="6" ry="9" fill="#0f5a62" />
        <ellipse cx="690" cy="162" rx="5" ry="8" fill="none" stroke="#125b6b" strokeWidth="3" />

        {/* bottom right */}
        <path d="M1076 766q20-14 28 12 12 14 6 24-20 6-8 14 20 4 50 12 30 14 70 24 20 14 30 30-30-24-60-24-50-16-110-22l-30-8v-44q30-4 38-12z" fill="#0a4043" />
        <path d="M1076 766q24-12 24 14-10 14-40 22" fill="none" stroke="#178c88" strokeWidth="4" />
        <path d="M1104 820q40 4 80 22l44 10" fill="none" stroke="#177a78" strokeWidth="4" />
        <path d="M1228 852q20 20 36 34l20 24" fill="none" stroke="#0a2426" strokeWidth="4" />
        <path d="M1060 744q40-4 60-40l40-10" fill="none" stroke="#0a1e21" strokeWidth="3" />

        {/* strip below the window */}
        <path d="M524 894q-6 40 20 60 10 20 20 40h34q-6-40-34-60-14-20-12-40z" fill="#0f6a67" />
        <path d="M600 900q-30 20-60 50-4 20-30 40" fill="none" stroke="#4e245c" strokeWidth="6" />
        <path d="M404 900q16 30 12 60l30 28M470 940q20 20 10 44M380 940l10 50" fill="none" stroke="#5a2066" strokeWidth="8" />
        <path d="M264 960q20-20 40 0M240 900q20 20 16 50" fill="none" stroke="#1a1433" strokeWidth="4" />
        <path d="M760 894q-10 40 16 60M880 930q30 40 80 44" fill="none" stroke="#0a3434" strokeWidth="5" />
      </g>

      {/* crisp highlights that stay smooth */}
      <g fill="none" strokeLinecap="round">
        <path d="M50 592q14 16 22 34t18 36" stroke="#14d3c4" strokeWidth="4" strokeOpacity="0.800" />
        <path d="M98 668q16 8 8 24" stroke="#13a99f" strokeWidth="6" />
        <path d="M89 649q6-7 11-1 2 7-6 6-6 0-5-5zM90 694q8-8 16-3 2 9-8 10-11 2-8-7z" fill="#17cfc0" />
        <path d="M0 872q10-6 20 4 14 14 28 0 14-8 22-2" stroke="#5f5058" strokeWidth="7" />
        <path d="M0 869q10-6 20 4 14 14 28 0 14-8 22-2" stroke="#a08d90" />
        <path d="M24 868q16 2 12-16" stroke="#6e5478" strokeWidth="2" />
        <path d="M628 88q10 6 20-8 18-26 26-2 2 20-2 40 4 20 10 28" stroke="#3a7f92" strokeWidth="2" />
        <path d="M486 62q-6 40 2 66 8 22 20 40" stroke="#043337" strokeWidth="2" strokeDasharray="5 6" />
        <path d="M478 70q2 3 0 4M484 74v3" stroke="#042a2e" strokeWidth="4" />
        <path d="M345 92q4 18 4 44 8 20 12 34" stroke="#6a4fa0" />
        <path d="M232 0q-2 20 8 36t8 32" stroke="#7e5a94" />
        <path d="M430 66q-6 50 34 76 20 14 34 30" stroke="#3a264c" />
        <ellipse cx="276" cy="118" rx="5" ry="6" fill="#0c0812" />
        <ellipse cx="262" cy="142" rx="6" ry="6" fill="#351a42" />
        <path d="M1062 858q16 26 24 25t22-22q16 18 28 10 8-8 10-26 2-8 8-7" stroke="#17504e" strokeWidth="1.500" />
        <path d="M1153 846q8-6 18-4 8 6 4 12-12 8-22-2" stroke="#123e40" strokeWidth="1.500" />
        <path d="M1070 760q22-8 24 12 0 12-14 20" stroke="#1a6e6b" strokeWidth="2" />
      </g>
    </svg>
  );
}

/* --------------------------------------------------------------- desktop */

type Shortcut = {
  label: string[];
  icon: ReactNode;
  place: string;
  arrow?: boolean;
};

const shortcuts: Shortcut[] = [
  { label: ["This PC"], icon: <ExplorerIcon />, place: "col-start-1 row-start-1", arrow: true },
  { label: ["Recycle Bin"], icon: <RecycleIcon />, place: "col-start-1 row-start-2" },
  { label: ["Jamil-Rayyan"], icon: <UserFolderIcon />, place: "col-start-1 row-start-3" },
  { label: ["HP Solution", "Center"], icon: <HpIcon />, place: "col-start-1 row-start-4", arrow: true },
  { label: ["Shop for HP", "Supplies"], icon: <PrinterIcon />, place: "col-start-1 row-start-5", arrow: true },
  { label: ["EaseUS Data", "Recovery ..."], icon: <EaseUsIcon />, place: "col-start-1 row-start-6", arrow: true },
  { label: ["Free YouTube", "Downloader"], icon: <DownloaderIcon />, place: "col-start-1 row-start-7", arrow: true },
  { label: ["Control", "Panel"], icon: <ControlPanelIcon />, place: "col-start-1 row-start-8" },
  { label: ["Capture123"], icon: <CaptureIcon />, place: "col-start-1 row-start-9" },
  { label: ["CODING"], icon: <CodingIcon />, place: "col-start-1 row-start-10" },
  { label: ["mcccc"], icon: <GrassBlockIcon />, place: "col-start-2 row-start-1" },
  { label: ["dff32h2-3e..."], icon: <BluePhotoIcon />, place: "col-start-2 row-start-2" },
  { label: ["desktop-ba..."], icon: <DesktopPhotoIcon />, place: "col-start-2 row-start-3" },
  { label: ["my talking", "tom free..."], icon: <TomIcon />, place: "col-start-2 row-start-4", arrow: true },
  { label: ["Screenshot", "(2023012..."], icon: <ScreenshotIcon />, place: "col-start-2 row-start-5" },
  { label: ["VLC media", "player"], icon: <VlcIcon />, place: "col-start-15 row-start-10", arrow: true },
  { label: ["PC Health", "Check"], icon: <HealthIcon />, place: "col-start-17 row-start-1", arrow: true },
];

function ShortcutArrow() {
  return (
    <svg aria-hidden viewBox="0 0 13 13" className="absolute bottom-0 left-0 size-[13px]">
      <path d="M0.500 0.500h12v12H0.500z" fill="#f6f6f6" stroke="#a9a9a9" />
      <path d="M5 2h6v6L9 6Q6 8 7 11H4Q2 7 6 4z" fill="#2c5ea8" />
    </svg>
  );
}

function DesktopIcon({ label, icon, place, arrow }: Shortcut) {
  return (
    <button type="button" className={clsx("flex flex-col items-center gap-[3px] pt-[7px] pr-px", place)}>
      <span className="relative">
        {icon}
        {arrow && <ShortcutArrow />}
      </span>
      <span className="flex flex-col text-center text-[11px] leading-[15px] whitespace-nowrap text-white text-shadow-[0_1px_2px_#000]">
        {label.map((line) => (
          <span key={line}>{line}</span>
        ))}
      </span>
    </button>
  );
}

/* ------------------------------------------------------------------ dock */

const dockItems: { name: string; icon: ReactNode }[] = [
  { name: "Computer", icon: <ComputerIcon /> },
  { name: "Teams", icon: <TeamsIcon /> },
  { name: "Paint 3D", icon: <PaintDropIcon /> },
  { name: "Touch display", icon: <TouchMonitor tile /> },
  { name: "Store", icon: <StoreTileIcon /> },
  { name: "VLC", icon: <VlcIcon /> },
  { name: "HP", icon: <HpIcon pink /> },
  { name: "Downloader", icon: <DownloaderIcon /> },
  { name: "Printer", icon: <PrinterIcon /> },
  { name: "Retro camera", icon: <RetroCameraIcon /> },
  { name: "Folders", icon: <FolderStackIcon /> },
  { name: "Edge", icon: <EdgeIcon /> },
  { name: "Bin", icon: <GlassBinIcon /> },
  { name: "Camera", icon: <LensAppIcon /> },
  { name: "Creative Cloud", icon: <CreativeCloudIcon /> },
];

function Dock() {
  return (
    <div className="absolute inset-x-0 bottom-0 flex justify-center pl-0.5">
      <div className="flex bg-black/45 px-1 pt-2.5 pb-2.5">
        {dockItems.map(({ name, icon }) => (
          <button key={name} type="button" aria-label={name} className="flex w-16 flex-col items-center gap-px">
            {icon}
            <span className="h-6 overflow-hidden opacity-50 [mask-image:linear-gradient(#000,transparent)]">
              <span className="block -scale-y-100">{icon}</span>
            </span>
          </button>
        ))}
      </div>
    </div>
  );
}

/* --------------------------------------------------------------- notepad */

const chromeGradient =
  "bg-linear-to-r from-[#0097a7] via-[#156f86] via-50% to-[#24183a]";

function NotepadWindow() {
  return (
    <section
      aria-label="Untitled - Notepad"
      className={clsx("absolute top-[171px] right-[219px] bottom-[83px] left-[115px] flex flex-col p-px", chromeGradient)}
    >
      <header className="flex h-[30px] shrink-0 items-center pl-[9px] text-white">
        <NotepadSmallIcon />
        <h1 className="grow pl-2 text-xs">Untitled - Notepad</h1>
        <button type="button" aria-label="Minimize" className="flex h-full w-[46px] items-center justify-center">
          <svg viewBox="0 0 10 10" className="size-2.5" stroke="#fff"><path d="M0 4.500h10" /></svg>
        </button>
        <button type="button" aria-label="Maximize" className="flex h-full w-[46px] items-center justify-center">
          <svg viewBox="0 0 10 10" className="size-2.5" stroke="#fff" fill="none"><path d="M0.500 0.500h9v9h-9z" /></svg>
        </button>
        <button type="button" aria-label="Close" className="flex h-full w-[46px] items-center justify-center">
          <svg viewBox="0 0 10 10" className="size-2.5" stroke="#fff" strokeWidth="1.300"><path d="M0 0l10 10M10 0L0 10" /></svg>
        </button>
      </header>
      <nav className="flex h-5 shrink-0 items-center border-b-2 border-[#f0f0f0] bg-white text-[11px] text-black">
        {["File", "Edit", "Format", "View", "Help"].map((item) => (
          <button key={item} type="button" className="px-[7px]">
            {item}
          </button>
        ))}
      </nav>
      <div className="flex min-h-0 grow bg-white">
        <span className="h-6 w-px bg-black" />
        <textarea aria-label="Document" className="min-w-0 grow resize-none bg-white outline-none" />
        <div className="flex w-4 flex-col justify-between bg-[#f0f0f0]">
          <button type="button" aria-label="Scroll up" className="flex h-[17px] items-center justify-center">
            <svg viewBox="0 0 8 6" className="h-1.5 w-2" fill="none" stroke="#bdbdbd" strokeWidth="2"><path d="M0.500 5L4 1.500 7.500 5" /></svg>
          </button>
          <button type="button" aria-label="Scroll down" className="flex h-[17px] items-center justify-center">
            <svg viewBox="0 0 8 6" className="h-1.5 w-2" fill="none" stroke="#bdbdbd" strokeWidth="2"><path d="M0.500 1L4 4.500 7.500 1" /></svg>
          </button>
        </div>
      </div>
    </section>
  );
}

/* --------------------------------------------------------------- taskbar */

const tasks: { name: string; icon: ReactNode; open?: boolean; active?: boolean }[] = [
  { name: "Chrome", icon: <ChromeIcon />, open: true },
  { name: "File Explorer", icon: <ExplorerIcon className="size-6" />, open: true },
  { name: "Touch display", icon: <TouchMonitor className="size-6" /> },
  { name: "Microsoft Store", icon: <StoreIcon /> },
  { name: "Settings", icon: <GearIcon />, open: true },
  { name: "Creative Cloud", icon: <CreativeCloudIcon className="size-6" />, open: true },
  { name: "Cards", icon: <CardsIcon />, open: true },
  { name: "Notepad", icon: <NotebookIcon />, active: true },
];

function Taskbar() {
  return (
    <footer className="relative flex h-10 shrink-0 bg-[#020507] text-white">
      <span className="absolute inset-x-0 top-0 h-px bg-linear-to-r from-[#0097a7] via-[#15607a] to-[#2a1a48]" />
      <button type="button" aria-label="Start" className="flex w-12 items-center justify-center">
        <svg viewBox="0 0 16 16" className="size-4" fill="#fff">
          <path d="M0 2.200L6.500 1.300v6.200H0zM7.500 1.200L16 0v7.500H7.500zM0 8.500h6.500v6.200L0 13.800zM7.500 8.500H16V16l-8.500-1.200z" />
        </svg>
      </button>
      <label className="relative flex w-[344px] items-center border border-[#5c5c5c] bg-[#333333] pl-[11px]">
        <svg viewBox="0 0 16 16" className="size-4 shrink-0" fill="none" stroke="#fff" strokeWidth="1.200">
          <circle cx="10" cy="6" r="5" />
          <path d="M6.500 9.500L0.500 15.500" />
        </svg>
        <input
          type="text"
          placeholder="Type here to search"
          className="min-w-0 grow bg-transparent pl-3 text-sm text-[#d6d6d6] outline-none placeholder:text-[#d6d6d6]"
        />
        <RoseDoodle />
      </label>
      <button type="button" aria-label="Cortana" className="flex w-12 items-center justify-center">
        <span className="size-4 rounded-full border-2 border-white" />
      </button>
      <button type="button" aria-label="Task View" className="mr-[3px] flex w-12 items-center justify-center">
        <svg viewBox="0 0 16 16" className="size-4" fill="none" stroke="#fff" strokeWidth="1.200">
          <path d="M0.600 4.600h9.800v6.800H0.600zM0.600 0.500v2h9.800v-2M0.600 15.500v-2h9.800v2M14.500 0v3.500M14.500 9v7" />
          <path d="M13 4.500h3v3h-3z" fill="#fff" stroke="none" />
        </svg>
      </button>
      <div className="flex gap-px">
        {tasks.map(({ name, icon, open, active }) => (
          <button
            key={name}
            type="button"
            aria-label={name}
            className={clsx("relative flex w-12 items-center justify-center", active && "bg-[#34383a]")}
          >
            {icon}
            {open && <span className="absolute inset-x-1 bottom-0 h-0.5 bg-[#6cd3e4]" />}
            {active && <span className="absolute inset-x-0 bottom-0 h-0.5 bg-[#6cd3e4]" />}
          </button>
        ))}
      </div>
      <div className="ml-auto flex items-stretch">
        <button type="button" className="relative flex w-[78px] items-center justify-center gap-2 bg-[#020304] text-sm">
          <svg aria-hidden viewBox="0 0 24 24" className="size-6">
            <path d="M10 0q3 8-9 11 3 5 8 5 9-2 8-10-2-5-7-6z" fill="#f3a62c" />
            <path d="M5 23q-5 0-5-4t5-5q1-6 7-6 5 0 7 5 5 0 5 5t-5 5z" fill="url(#cloud)" />
          </svg>
          7°C
        </button>
        <button type="button" aria-label="Show hidden icons" className="flex w-6 items-center justify-center">
          <svg viewBox="0 0 12 8" className="h-2 w-3" fill="none" stroke="#fff" strokeWidth="1.500"><path d="M0.500 7L6 1.500 11.500 7" /></svg>
        </button>
        <button type="button" aria-label="Diamond" className="flex w-6 items-center justify-center">
          <svg viewBox="0 0 14 14" className="size-3.5"><path d="M7 0l7 7-7 7-7-7z" fill="#7f8893" /></svg>
        </button>
        <button type="button" aria-label="Volume" className="flex w-6 items-center justify-center">
          <svg viewBox="0 0 16 14" className="h-3.5 w-4" fill="none" stroke="#fff" strokeWidth="1.200">
            <path d="M0.600 5h2.400l3-3.500v11L3 9H0.600zM8.500 5q1.500 2 0 4" />
            <path d="M10.500 3q3 4 0 8" stroke="#aaa" />
            <path d="M12.500 1.500q4.500 5.500 0 11" stroke="#666" />
          </svg>
        </button>
        <button type="button" aria-label="Network" className="flex w-7 items-center justify-center">
          <svg viewBox="0 0 14 14" className="size-3.5" fill="none" strokeWidth="1.200">
            <path d="M1 13Q1 2 13 1.500" stroke="#8a8a8a" />
            <path d="M4 13Q4 5 13 4.500M7 13q0-5 6-5.500" stroke="#fff" />
            <path d="M10 13q0-3 3-3v3z" fill="#fff" stroke="none" />
          </svg>
        </button>
        <button type="button" className="flex w-[62px] flex-col items-center justify-center text-[11px] leading-[18px]">
          <time dateTime="18:14">18:14</time>
          <time dateTime="2023-01-25">25/01/2023</time>
        </button>
        <button type="button" aria-label="Notifications" className="relative flex w-[50px] items-center justify-center">
          <svg viewBox="0 0 16 16" className="size-4">
            <path d="M0 0h16v12H9l-4 4v-4H0z" fill="#fff" />
            <path d="M3 3h10M3 6h10M3 9h7" stroke="#111" />
          </svg>
          <span className="absolute right-2 bottom-1 flex size-4 items-center justify-center rounded-full border border-[#8a8a8a] bg-[#2b2b2b] text-[11px] leading-none">
            1
          </span>
        </button>
        <span className="w-[7px]" />
      </div>
    </footer>
  );
}

export default function App() {
  return (
    <div className="relative isolate flex h-screen flex-col overflow-hidden font-['Open_Sans','Noto_Sans',sans-serif]">
      <SharedDefs />
      <Wallpaper />
      <main className="relative min-h-0 grow">
        <div className="grid grid-cols-[repeat(17,75px)] grid-rows-[repeat(10,98px)]">
          {shortcuts.map((s) => (
            <DesktopIcon key={s.label[0]} {...s} />
          ))}
        </div>
        <Dock />
        <NotepadWindow />
      </main>
      <Taskbar />
    </div>
  );
}
